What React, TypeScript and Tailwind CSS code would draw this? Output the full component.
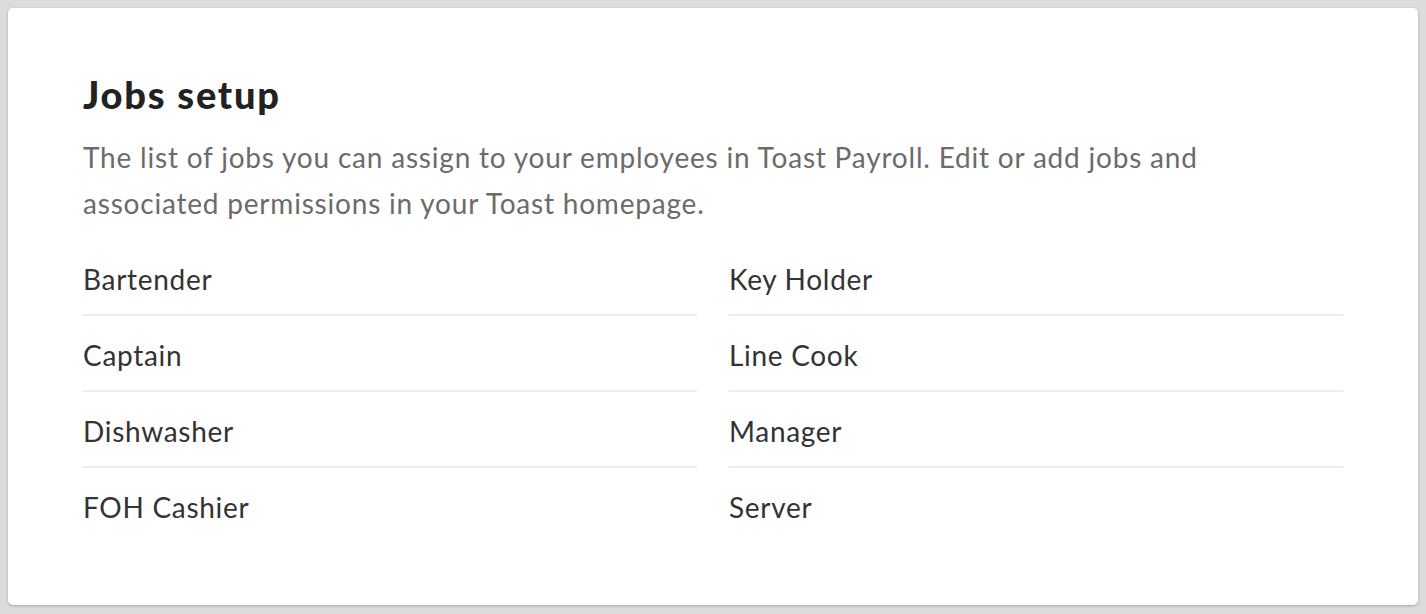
const jobs = [
  ["Bartender", "Key Holder"],
  ["Captain", "Line Cook"],
  ["Dishwasher", "Manager"],
  ["FOH Cashier", "Server"],
];

export default function App() {
  return (
    <div
      className="min-h-screen w-full bg-[#dcdcdc] p-[8px]"
      style={{ fontFamily: '"Lato", "Open Sans", sans-serif' }}
    >
      <div className="h-[597px] rounded-[5px] bg-white px-[75px] pt-[64px] shadow-[0_1px_3px_rgba(0,0,0,0.25)]">
        <h1 className="text-[38px] font-black leading-[44px] tracking-[1.8px] text-[#222222]">
          Jobs setup
        </h1>
        <p className="mt-[18px] text-[28px] leading-[46px] tracking-[0.8px] text-[#6b6b6b]">
          The list of jobs you can assign to your employees in Toast Payroll. Edit or add jobs and
          <br />
          associated permissions in your Toast homepage.
        </p>
        <div className="mt-[14px] grid grid-cols-2 gap-x-[32px]">
          {[0, 1].map((col) => (
            <div key={col} className="flex flex-col">
              {jobs.map((row, i) => (
                <div
                  key={row[col]}
                  className={
                    "h-[76px] pt-[21px] text-[28px] leading-[36px] tracking-[0.7px] text-[#333333] " +
                    (i < jobs.length - 1 ? "border-b-2 border-[#ececec]" : "")
                  }
                >
                  {row[col]}
                </div>
              ))}
            </div>
          ))}
        </div>
      </div>
    </div>
  );
}
